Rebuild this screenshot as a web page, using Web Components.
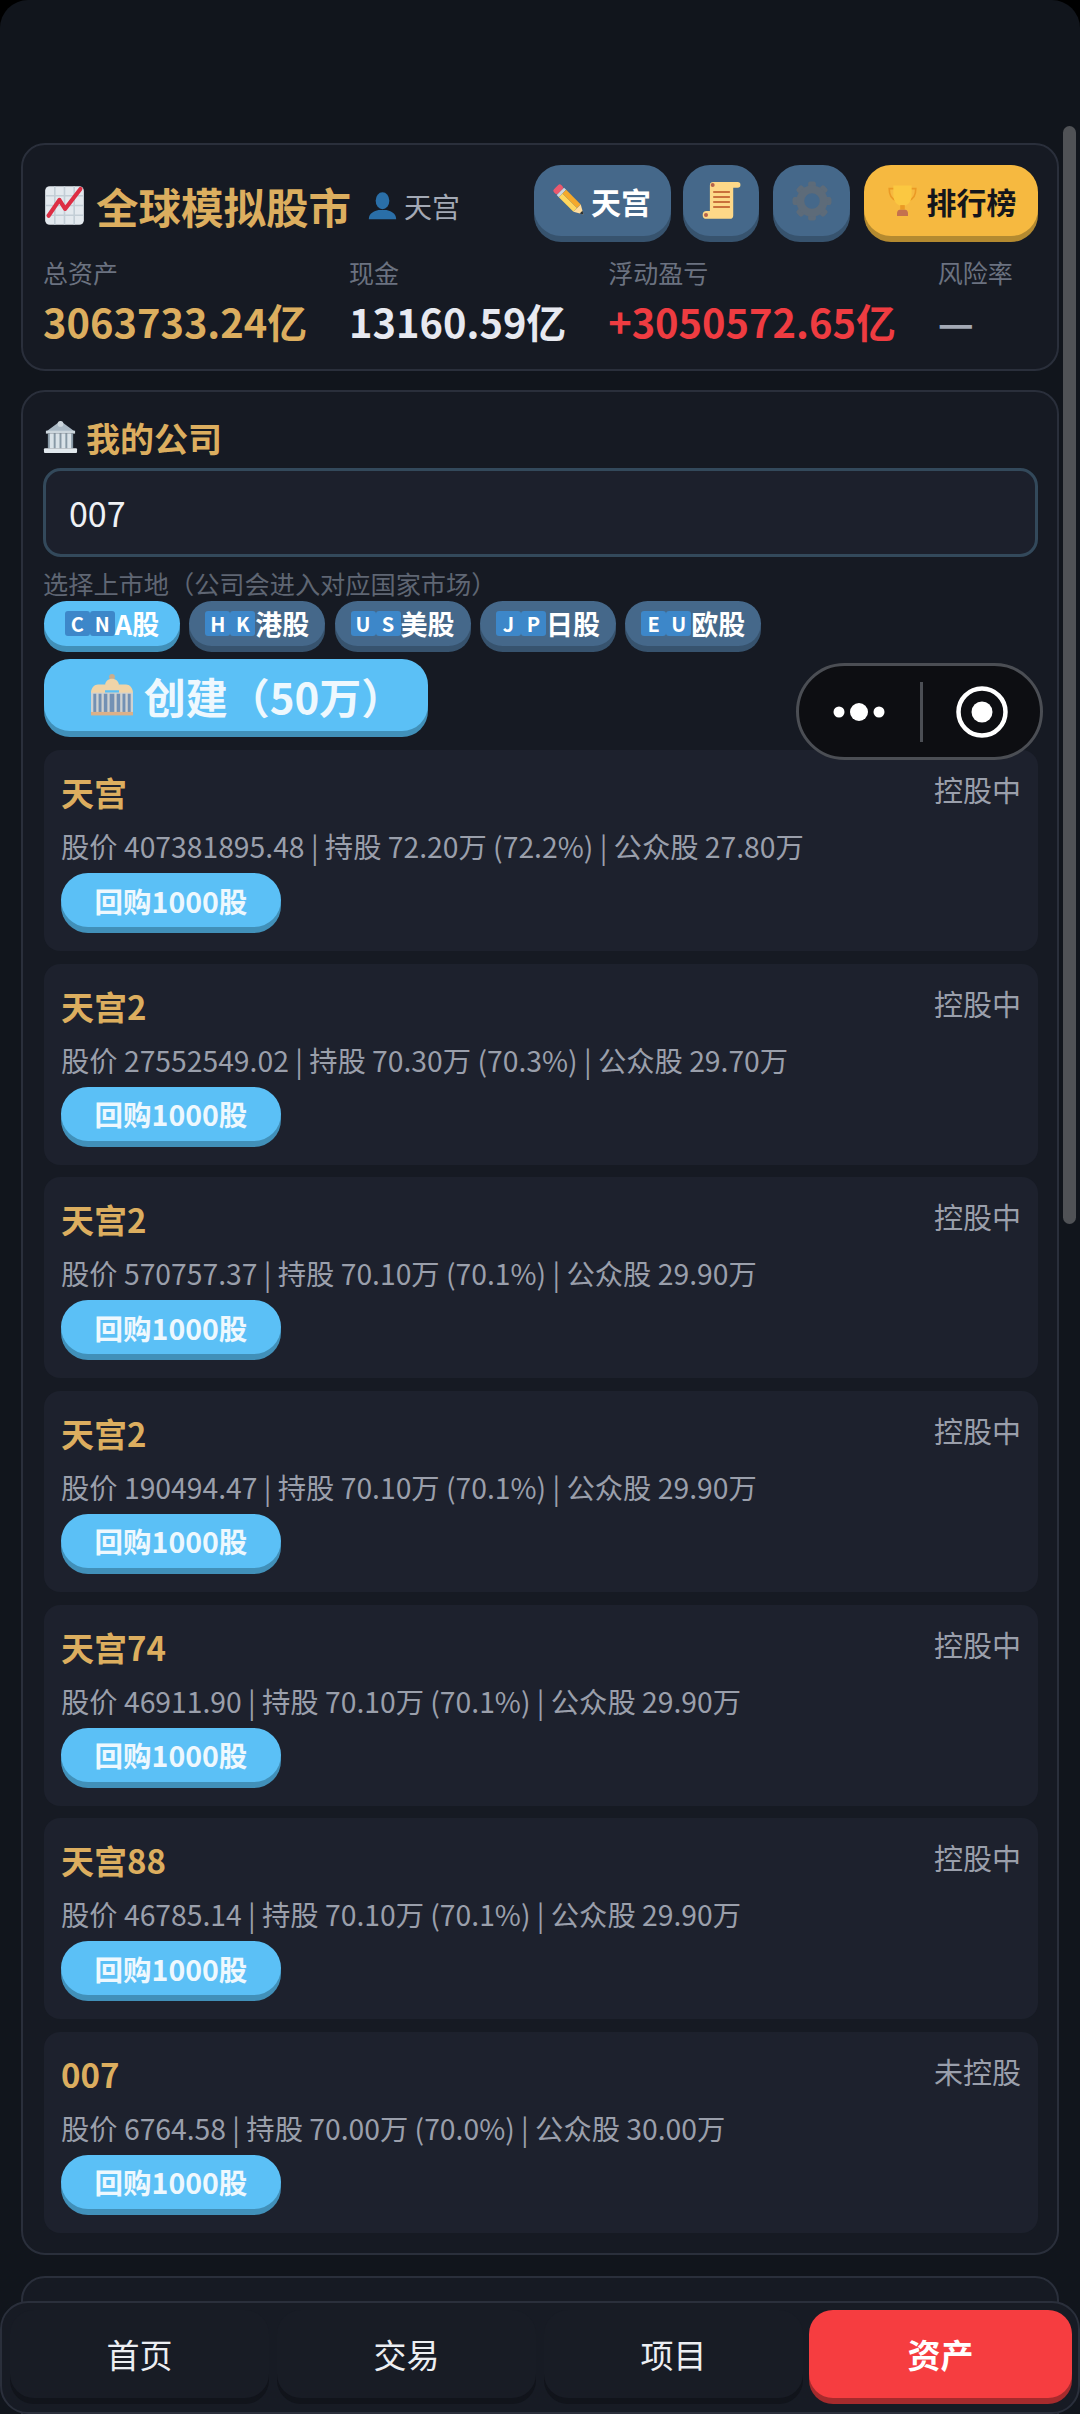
<!DOCTYPE html>
<html lang="zh">
<head>
<meta charset="utf-8">
<title>全球模拟股市</title>
<style>
  html, body { margin: 0; background: #000; }
  body { font-family: "Noto Sans CJK SC", "Noto Sans", sans-serif; }
</style>
</head>
<body>
<stock-app>
  <game-panel class="top">
    <header-bar></header-bar>
    <stat-row>
      <stat-item label="总资产" tone="gold">3063733.24亿</stat-item>
      <stat-item label="现金" tone="white">13160.59亿</stat-item>
      <stat-item label="浮动盈亏" tone="red">+3050572.65亿</stat-item>
      <stat-item label="风险率" tone="grey">—</stat-item>
    </stat-row>
  </game-panel>

  <game-panel class="company">
    <company-form></company-form>
    <company-list>
      <company-card status="控股中"><span slot="name">天宫</span>股价 407381895.48 | 持股 72.20万 (72.2%) | 公众股 27.80万</company-card>
      <company-card status="控股中"><span slot="name">天宫2</span>股价 27552549.02 | 持股 70.30万 (70.3%) | 公众股 29.70万</company-card>
      <company-card status="控股中"><span slot="name">天宫2</span>股价 570757.37 | 持股 70.10万 (70.1%) | 公众股 29.90万</company-card>
      <company-card status="控股中"><span slot="name">天宫2</span>股价 190494.47 | 持股 70.10万 (70.1%) | 公众股 29.90万</company-card>
      <company-card status="控股中"><span slot="name">天宫74</span>股价 46911.90 | 持股 70.10万 (70.1%) | 公众股 29.90万</company-card>
      <company-card status="控股中"><span slot="name">天宫88</span>股价 46785.14 | 持股 70.10万 (70.1%) | 公众股 29.90万</company-card>
      <company-card status="未控股"><span slot="name">007</span>股价 6764.58 | 持股 70.00万 (70.0%) | 公众股 30.00万</company-card>
    </company-list>
  </game-panel>

  <game-panel class="rest"></game-panel>

  <float-capsule></float-capsule>
  <page-scrollbar></page-scrollbar>
  <bottom-nav></bottom-nav>
</stock-app>

<script>
// emoji drawn by hand, no colour emoji font on the box
const gearTeeth = [0, 45, 90, 135, 180, 225, 270, 315]
  .map(a => `<rect x="14.5" y="0.5" width="7" height="9" rx="2" transform="rotate(${a} 18 18)"/>`).join('');

const ICONS = {
  chart: `<rect x="1" y="1" width="34" height="34" rx="4" fill="#e3e9ee"/>
    <path d="M1 9.5h34M1 18h34M1 26.5h34M9.5 1v34M18 1v34M26.5 1v34" stroke="#c3ced6" stroke-width="1.4"/>
    <path d="M4 27 13.5 13 18.5 21 32 3.5" fill="none" stroke="#dd2e44" stroke-width="3.6" stroke-linecap="round" stroke-linejoin="round"/>`,
  bust: `<ellipse cx="18" cy="12" rx="8.5" ry="10.5" fill="#2a6fa8"/>
    <path d="M1 35c0-8 7-10 12-11.5h10c5 1.500 12 3.500 12 11.500z" fill="#2a6fa8"/>`,
  pencil: `<g transform="rotate(-45 18 18)">
      <rect x="12" y="-4" width="12" height="7" rx="2.500" fill="#ea596e"/>
      <rect x="12" y="3" width="12" height="3.500" fill="#ccd6dd"/>
      <rect x="12" y="6.500" width="6" height="24" fill="#ffd75e"/>
      <rect x="18" y="6.500" width="6" height="24" fill="#f4a92c"/>
      <path d="M12 30.500h12L18 41z" fill="#ffdc9e"/>
      <path d="M15.700 37h4.600L18 41z" fill="#292f33"/>
    </g>`,
  scroll: `<path d="M8 4a3 3 0 0 1 3-3h22a2.500 2.500 0 0 1 0 5h-4v25a3 3 0 0 1-3 3H5a3 3 0 0 1 0-7h3z" fill="#fdd888"/>
    <circle cx="10.500" cy="3.500" r="1.800" fill="#b5634a"/>
    <circle cx="4.500" cy="30.500" r="1.800" fill="#b5634a"/>
    <path d="M11 10h15M11 14.500h15M11 19h15M11 23.500h15" stroke="#c9703c" stroke-width="1.800"/>`,
  gear: `<g fill="#5d6b79">${gearTeeth}</g>
    <circle cx="18" cy="18" r="10.500" fill="none" stroke="#5d6b79" stroke-width="7"/>`,
  trophy: `<path d="M9 5H3.500c0 8 3 12 8 13M27 5h5.500c0 8-3 12-8 13" fill="none" stroke="#eb9a25" stroke-width="1.800"/>
    <path d="M8 1.500h20v10c0 8-4.500 12.500-10 12.500S8 19.500 8 11.500z" fill="#fbc841"/>
    <rect x="15.500" y="23" width="5" height="5" fill="#eb9a25"/>
    <path d="M12 35v-3c0-2 1-4 3-4h6c2 0 3 2 3 4v3z" fill="#c4714e"/>`,
  bank: `<path d="M18 1 3 12h30z" fill="#a9b8c4"/>
    <circle cx="18" cy="4" r="3" fill="#ccd6dd"/>
    <rect x="3" y="11" width="30" height="3" fill="#ccd6dd"/>
    <rect x="5" y="14" width="26" height="15" fill="#8899a6"/>
    <path d="M7 14h4v15H7zM13 14h4v15h-4zM19 14h4v15h-4zM25 14h4v15h-4z" fill="#d9e2e8"/>
    <rect x="1" y="29" width="34" height="5" rx="1" fill="#e1e8ed"/>`,
  tower: `<circle cx="18" cy="2.500" r="2.500" fill="#c9ad8d"/>
    <path d="M12 10c0-4 3-6 6-6s6 2 6 6v4H12z" fill="#f0d4a8"/>
    <path d="M0 16c0-4 3-7 6-7h6v7h12V9h6c3 0 6 3 6 7v1H0z" fill="#f0d4a8"/>
    <rect x="0" y="16" width="36" height="17" fill="#cfd2d2"/>
    <path d="M2 17h2.500v16H2zM6.500 17H9v16H6.500zM11 17h3v16h-3zM16 17h4v16h-4zM22 17h3v16h-3zM27 17h2.500v16H27zM31.500 17H34v16h-2.500z" fill="#7391b4"/>
    <rect x="0" y="32.500" width="36" height="3" fill="#dcb088"/>`,
};

class EmojiIcon extends HTMLElement {
  connectedCallback() {
    const size = this.getAttribute('size') || 32;
    const root = this.shadowRoot || this.attachShadow({ mode: 'open' });
    root.innerHTML = `<style>
      :host { display: inline-flex; flex: none; width: ${size}px; height: ${size}px; }
      svg { display: block; width: 100%; height: 100%; overflow: visible; }
    </style><svg viewBox="0 0 36 36" aria-hidden="true">${ICONS[this.getAttribute('name')] || ''}</svg>`;
  }
}

const pressTpl = document.createElement('template');
pressTpl.innerHTML = `<style>
  :host {
    display: inline-flex;
    align-items: center;
    justify-content: center;
    box-sizing: border-box;
    flex: none;
    color: #fff;
    font-weight: 700;
    background: var(--face, #45688a);
    box-shadow: 0 6px 0 var(--edge, #37536e);
    border-radius: var(--radius, 26px);
    margin-bottom: 6px;
  }
  :host([tone="slate"]) { --face: #45688a; --edge: #37536e; }
  :host([tone="blue"])  { --face: #5bc0f6; --edge: #4190b9; }
  :host([tone="gold"])  { --face: #f6b940; --edge: #b48a30; color: #14161c; }
  :host([tone="red"])   { --face: #f63d40; --edge: #a62b2d; }
  :host([tone="dark"])  { --face: #181c25; --edge: #11141b; color: #eceef2; font-weight: 400; }
</style><slot></slot>`;

class PressButton extends HTMLElement {
  constructor() {
    super();
    this.attachShadow({ mode: 'open' }).appendChild(pressTpl.content.cloneNode(true));
  }
}

const panelTpl = document.createElement('template');
panelTpl.innerHTML = `<style>
  :host {
    display: block;
    box-sizing: border-box;
    background: #161a23;
    border: 2px solid #2a2f3b;
    border-radius: 24px;
  }
  :host(.top) { height: 228px; padding: 20px 19px 0 20px; }
  :host(.company) { height: 1865px; margin-top: 19px; padding: 23px 19px 0 20px; }
  :host(.rest) { height: 400px; margin-top: 21px; }
</style><slot></slot>`;

class GamePanel extends HTMLElement {
  constructor() {
    super();
    this.attachShadow({ mode: 'open' }).appendChild(panelTpl.content.cloneNode(true));
  }
}

const appTpl = document.createElement('template');
appTpl.innerHTML = `<style>
  :host {
    display: block;
    position: relative;
    box-sizing: border-box;
    width: 1080px;
    height: 2414px;
    padding: 143px 21px 0;
    overflow: hidden;
    background: #11151c;
    border-radius: 28px 28px 0 0;
  }
</style><slot></slot>`;

class StockApp extends HTMLElement {
  constructor() {
    super();
    this.attachShadow({ mode: 'open' }).appendChild(appTpl.content.cloneNode(true));
  }
}

const headerTpl = document.createElement('template');
headerTpl.innerHTML = `<style>
  :host { display: flex; align-items: flex-start; justify-content: space-between; height: 77px; }
  .brand { display: flex; align-items: center; box-sizing: border-box; height: 71px; padding: 10px 0 0 1px; }
  h1 { margin: 0 0 0 11px; font-size: 42.500px; line-height: 56px; font-weight: 700; color: #dcae5f; white-space: nowrap; }
  .who { display: flex; align-items: center; margin-left: 17px; color: #a3a9b5; font-size: 28px; }
  .who span { margin-left: 7px; }
  .acts { display: flex; gap: 14px; }
  press-button { height: 71px; font-size: 30px; --radius: 27px; }
  .edit { width: 137px; gap: 6px; margin-right: -2px; }
  .sq { width: 76px; }
  .sq + .sq { width: 77px; }
  .rank { width: 174px; gap: 8px; }
</style>
<div class="brand">
  <emoji-icon name="chart" size="41"></emoji-icon>
  <h1>全球模拟股市</h1>
  <div class="who"><emoji-icon name="bust" size="29"></emoji-icon><span>天宫</span></div>
</div>
<div class="acts">
  <press-button tone="slate" class="edit"><emoji-icon name="pencil" size="31"></emoji-icon>天宫</press-button>
  <press-button tone="slate" class="sq"><emoji-icon name="scroll" size="40"></emoji-icon></press-button>
  <press-button tone="slate" class="sq"><emoji-icon name="gear" size="40"></emoji-icon></press-button>
  <press-button tone="gold" class="rank"><emoji-icon name="trophy" size="33"></emoji-icon>排行榜</press-button>
</div>`;

class HeaderBar extends HTMLElement {
  constructor() {
    super();
    this.attachShadow({ mode: 'open' }).appendChild(headerTpl.content.cloneNode(true));
  }
}

const statRowTpl = document.createElement('template');
statRowTpl.innerHTML = `<style>
  :host { display: flex; gap: 42px; margin-top: 15px; }
</style><slot></slot>`;

class StatRow extends HTMLElement {
  constructor() {
    super();
    this.attachShadow({ mode: 'open' }).appendChild(statRowTpl.content.cloneNode(true));
  }
}

const statTpl = document.createElement('template');
statTpl.innerHTML = `<style>
  :host { display: block; flex: none; }
  .label { font-size: 25px; line-height: 30px; color: #6b7280; }
  .value { margin-top: 12px; font-size: 39.800px; line-height: 44px; font-weight: 700; white-space: nowrap; color: var(--c); }
  :host([tone="gold"])  { --c: #dcae5f; }
  :host([tone="white"]) { --c: #e7e9f0; }
  :host([tone="red"])   { --c: #ef3c41; }
  :host([tone="grey"])  { --c: #a3a9b5; }
</style>
<div class="label"></div>
<div class="value"><slot></slot></div>`;

class StatItem extends HTMLElement {
  constructor() {
    super();
    this.attachShadow({ mode: 'open' }).appendChild(statTpl.content.cloneNode(true));
  }
  connectedCallback() {
    this.shadowRoot.querySelector('.label').textContent = this.getAttribute('label');
  }
}

const chipTpl = document.createElement('template');
chipTpl.innerHTML = `<style>
  :host { display: block; }
  press-button { width: 136px; height: 45px; font-size: 27px; font-weight: 700; --radius: 23px; }
  .flag { display: flex; margin-right: 0; }
  .flag b {
    display: block;
    width: 25px;
    height: 25px;
    font-size: 20px;
    line-height: 25px;
    font-weight: 700;
    text-align: center;
    background: #3d87c9;
    border-radius: 3px;
  }
</style>
<press-button>
  <span class="flag"><b></b><b></b></span><slot></slot>
</press-button>`;

class MarketChip extends HTMLElement {
  constructor() {
    super();
    this.attachShadow({ mode: 'open' }).appendChild(chipTpl.content.cloneNode(true));
  }
  connectedCallback() {
    const code = this.getAttribute('code') || '';
    const boxes = this.shadowRoot.querySelectorAll('.flag b');
    boxes[0].textContent = code[0];
    boxes[1].textContent = code[1];
    this.shadowRoot.querySelector('press-button')
      .setAttribute('tone', this.hasAttribute('active') ? 'blue' : 'slate');
  }
}

const formTpl = document.createElement('template');
formTpl.innerHTML = `<style>
  :host { display: block; }
  h2 { display: flex; align-items: center; gap: 8px; margin: 0; height: 44px; font-size: 34px; font-weight: 700; color: #dcae5f; }
  .field {
    box-sizing: border-box;
    height: 89px;
    margin-top: 9px;
    padding-left: 23px;
    display: flex;
    align-items: center;
    font-size: 34px;
    color: #eff1f5;
    background: #1c202c;
    border: 3px solid #33495b;
    border-radius: 18px;
  }
  .hint { margin-top: 11px; font-size: 25.200px; line-height: 30px; color: #5f6673; white-space: nowrap; }
  .chips { display: flex; gap: 9.300px; margin-top: 3px; margin-left: 1px; }
  .create {
    display: flex;
    width: 384px;
    height: 72px;
    margin: 7px 0 0 1px;
    padding-left: 22px;
    gap: 11px;
    font-size: 42px;
    font-weight: 700;
    --radius: 26px;
    color: #eef8fe;
  }
</style>
<h2><emoji-icon name="bank" size="35"></emoji-icon>我的公司</h2>
<div class="field">007</div>
<div class="hint">选择上市地（公司会进入对应国家市场）</div>
<div class="chips">
  <market-chip code="CN" active>A股</market-chip>
  <market-chip code="HK">港股</market-chip>
  <market-chip code="US">美股</market-chip>
  <market-chip code="JP">日股</market-chip>
  <market-chip code="EU">欧股</market-chip>
</div>
<press-button tone="blue" class="create"><emoji-icon name="tower" size="42"></emoji-icon>创建（50万）</press-button>`;

class CompanyForm extends HTMLElement {
  constructor() {
    super();
    this.attachShadow({ mode: 'open' }).appendChild(formTpl.content.cloneNode(true));
  }
}

const listTpl = document.createElement('template');
listTpl.innerHTML = `<style>
  :host { display: flex; flex-direction: column; gap: 12.670px; margin-top: 19px; margin-left: 1px; }
</style><slot></slot>`;

class CompanyList extends HTMLElement {
  constructor() {
    super();
    this.attachShadow({ mode: 'open' }).appendChild(listTpl.content.cloneNode(true));
  }
}

const cardTpl = document.createElement('template');
cardTpl.innerHTML = `<style>
  :host {
    display: block;
    box-sizing: border-box;
    height: 201px;
    padding: 19px 17px 0 17px;
    background: #1d212d;
    border-radius: 16px;
  }
  .top { display: flex; justify-content: space-between; align-items: flex-start; height: 46px; }
  .name { font-size: 33px; line-height: 46px; font-weight: 700; color: #dcae5f; }
  .status { font-size: 29px; line-height: 40px; color: #9a9fab; }
  .detail { margin-top: 11px; font-size: 28.300px; line-height: 40px; color: #9a9fab; white-space: nowrap; }
  press-button { width: 220px; height: 54px; margin-top: 7px; font-size: 28.500px; font-weight: 700; --radius: 27px; color: #eef8fe; }
</style>
<div class="top">
  <div class="name"><slot name="name"></slot></div>
  <div class="status"></div>
</div>
<div class="detail"><slot></slot></div>
<press-button tone="blue">回购1000股</press-button>`;

class CompanyCard extends HTMLElement {
  constructor() {
    super();
    this.attachShadow({ mode: 'open' }).appendChild(cardTpl.content.cloneNode(true));
  }
  connectedCallback() {
    this.shadowRoot.querySelector('.status').textContent = this.getAttribute('status');
  }
}

// wechat mini program capsule, sits over the page
const capsuleTpl = document.createElement('template');
capsuleTpl.innerHTML = `<style>
  :host {
    position: absolute;
    left: 796px;
    top: 663px;
    width: 247px;
    height: 97px;
    box-sizing: border-box;
    display: flex;
    align-items: center;
    background: #0d0e12;
    border: 3px solid #4b4e54;
    border-radius: 49px;
  }
  svg { display: block; }
  .dots { width: 121px; display: flex; justify-content: center; }
  .line { width: 3px; height: 60px; background: #4b4e54; }
  .aim { flex: 1; display: flex; justify-content: center; }
</style>
<div class="dots"><svg width="54" height="20" viewBox="0 0 54 20"><circle cx="6" cy="10" r="5.500" fill="#fff"/><circle cx="26" cy="10" r="9" fill="#fff"/><circle cx="46" cy="10" r="5.500" fill="#fff"/></svg></div>
<div class="line"></div>
<div class="aim"><svg width="52" height="52" viewBox="0 0 52 52"><circle cx="26" cy="26" r="23.500" fill="none" stroke="#fff" stroke-width="4.500"/><circle cx="26" cy="26" r="10.500" fill="#fff"/></svg></div>`;

class FloatCapsule extends HTMLElement {
  constructor() {
    super();
    this.attachShadow({ mode: 'open' }).appendChild(capsuleTpl.content.cloneNode(true));
  }
}

class PageScrollbar extends HTMLElement {
  constructor() {
    super();
    this.attachShadow({ mode: 'open' }).innerHTML = `<style>
      :host {
        position: absolute;
        left: 1063px;
        top: 126px;
        width: 13px;
        height: 1098px;
        background: #505256;
        border-radius: 7px;
      }
    </style>`;
  }
}

const navTpl = document.createElement('template');
navTpl.innerHTML = `<style>
  :host {
    position: absolute;
    left: 0;
    top: 2301px;
    width: 1080px;
    height: 113px;
    box-sizing: border-box;
    padding: 7px 6px 0 8px;
    display: flex;
    gap: 8px;
    background: #171b24;
    border: 2px solid #2a2f3b;
    border-radius: 28px;
  }
  press-button { width: 259px; height: 88px; font-size: 33px; --radius: 24px; }
  press-button[tone="red"] { width: 263px; margin-left: -2px; font-weight: 700; }
</style>
<press-button tone="dark">首页</press-button>
<press-button tone="dark">交易</press-button>
<press-button tone="dark">项目</press-button>
<press-button tone="red">资产</press-button>`;

class BottomNav extends HTMLElement {
  constructor() {
    super();
    this.attachShadow({ mode: 'open' }).appendChild(navTpl.content.cloneNode(true));
  }
}

customElements.define('emoji-icon', EmojiIcon);
customElements.define('press-button', PressButton);
customElements.define('game-panel', GamePanel);
customElements.define('stock-app', StockApp);
customElements.define('header-bar', HeaderBar);
customElements.define('stat-row', StatRow);
customElements.define('stat-item', StatItem);
customElements.define('market-chip', MarketChip);
customElements.define('company-form', CompanyForm);
customElements.define('company-list', CompanyList);
customElements.define('company-card', CompanyCard);
customElements.define('float-capsule', FloatCapsule);
customElements.define('page-scrollbar', PageScrollbar);
customElements.define('bottom-nav', BottomNav);
</script>
</body>
</html>
